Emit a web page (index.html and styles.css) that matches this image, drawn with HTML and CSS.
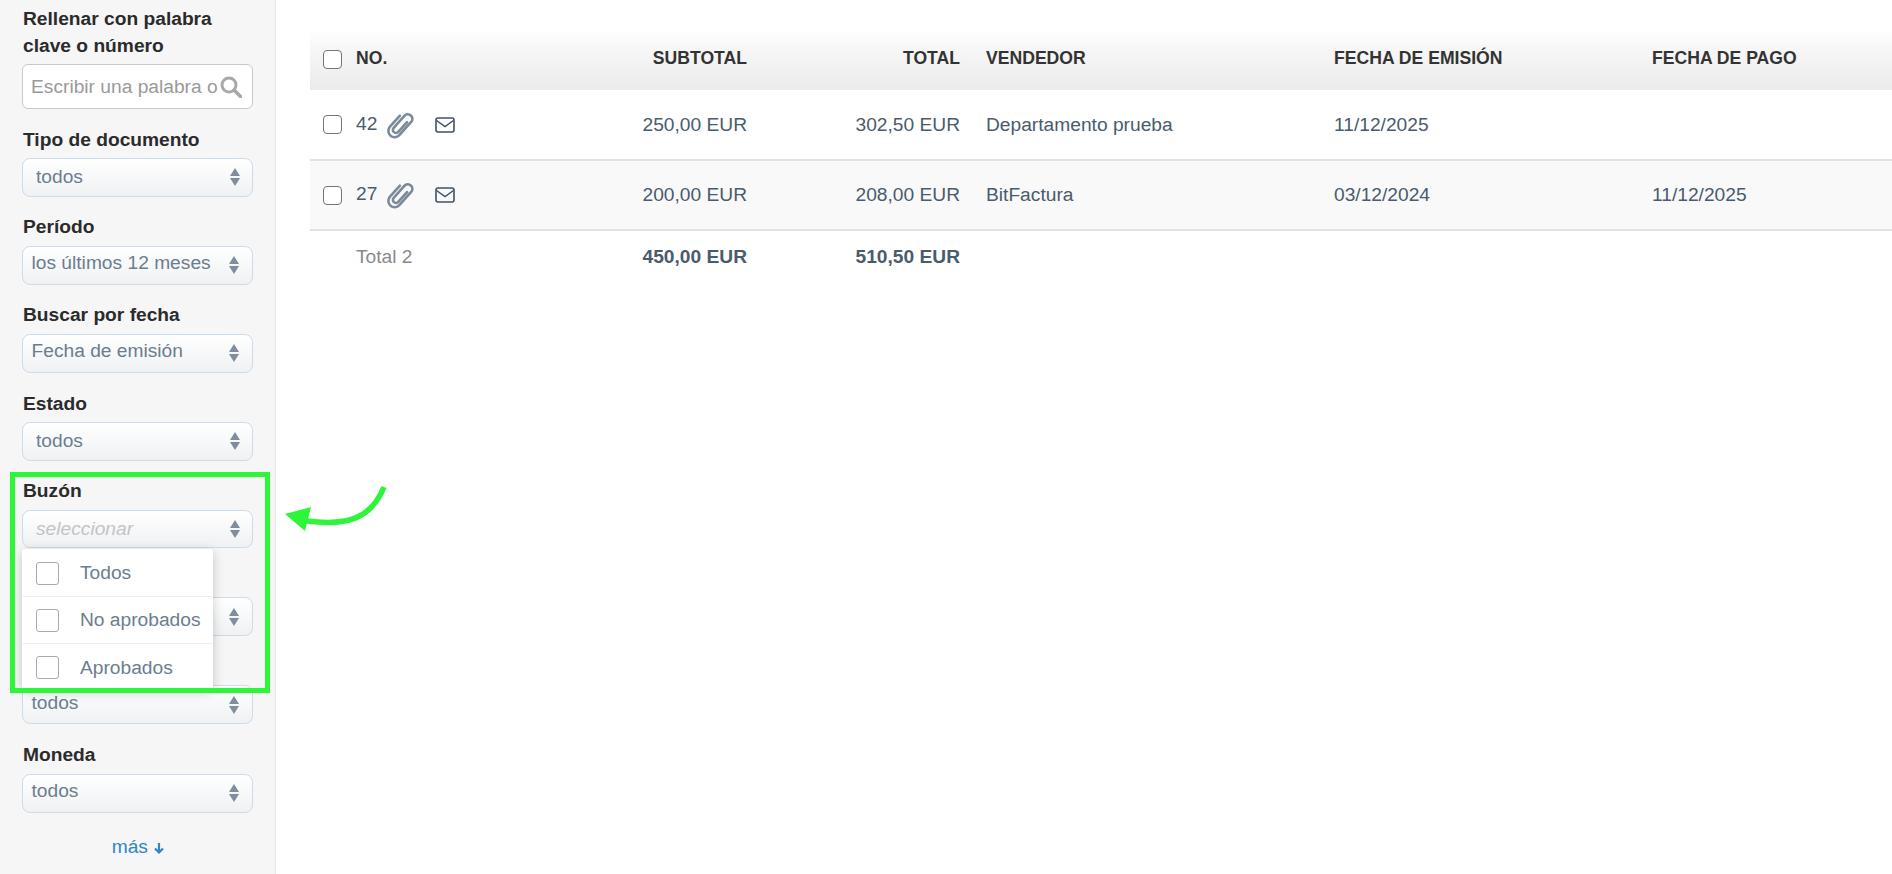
FILE: index.html
```html
<!DOCTYPE html>
<html lang="es">
<head>
<meta charset="utf-8">
<title>Gastos</title>
<link rel="stylesheet" href="styles.css">
</head>
<body>
<svg class="defs" aria-hidden="true">
  <symbol id="updown" viewBox="0 0 12 20"><path d="M6 1 11 9H1Z"/><path d="M1 11H11L6 19Z"/></symbol>
  <symbol id="clip" viewBox="0 0 28 26"><g transform="rotate(42 14 13)"><path d="M8.500 7V20a5.500 5.500 0 0 0 11 0V4.500a4 4 0 0 0-8 0V18.500a2.700 2.700 0 0 0 5.400 0V7" fill="none" stroke-width="2.300" stroke-linecap="round"/></g></symbol>
  <symbol id="mail" viewBox="0 0 20 16"><rect x="1" y="1" width="18" height="14" rx="2" fill="none" stroke-width="1.600"/><path d="M1.500 3.500 10 9.500l8.500-6" fill="none" stroke-width="1.500"/></symbol>
</svg>
<div class="app">
  <aside class="sidebar">
    <div class="field">
      <label class="label">Rellenar con palabra clave o número</label>
      <div class="search"><span class="search-text">Escribir una palabra o</span>
        <svg class="search-icon" viewBox="0 0 22 22"><circle cx="9" cy="9" r="7" fill="none" stroke="#a8a8a8" stroke-width="3"/><path d="M14 14l6.500 6.500" stroke="#a8a8a8" stroke-width="3.500" stroke-linecap="round"/></svg>
      </div>
    </div>
    <div class="field">
      <label class="label">Tipo de documento</label>
      <div class="select short inset"><span>todos</span><svg class="updown"><use href="#updown"/></svg></div>
    </div>
    <div class="field">
      <label class="label">Período</label>
      <div class="select"><span>los últimos 12 meses</span><svg class="updown"><use href="#updown"/></svg></div>
    </div>
    <div class="field">
      <label class="label">Buscar por fecha</label>
      <div class="select"><span>Fecha de emisión</span><svg class="updown"><use href="#updown"/></svg></div>
    </div>
    <div class="field">
      <label class="label">Estado</label>
      <div class="select short inset"><span>todos</span><svg class="updown"><use href="#updown"/></svg></div>
    </div>
    <div class="field has-menu">
      <label class="label">Buzón</label>
      <div class="select short inset placeholder"><span>seleccionar</span><svg class="updown"><use href="#updown"/></svg></div>
      <ul class="menu">
        <li class="menu-item"><span class="box"></span>Todos</li>
        <li class="menu-item"><span class="box"></span>No aprobados</li>
        <li class="menu-item"><span class="box"></span>Aprobados</li>
      </ul>
    </div>
    <div class="field">
      <label class="label">&nbsp;</label>
      <div class="select"><span>todos</span><svg class="updown"><use href="#updown"/></svg></div>
    </div>
    <div class="field">
      <label class="label">&nbsp;</label>
      <div class="select"><span>todos</span><svg class="updown"><use href="#updown"/></svg></div>
    </div>
    <div class="field">
      <label class="label">Moneda</label>
      <div class="select"><span>todos</span><svg class="updown"><use href="#updown"/></svg></div>
    </div>
    <a class="more">más <svg class="more-icon" viewBox="0 0 12 12"><path d="M6 1V10M2 6.500 6 10.500 10 6.500" fill="none" stroke="#2e86c8" stroke-width="2.200"/></svg></a>
  </aside>
  <main class="main">
    <table class="grid">
      <colgroup>
        <col class="c-check"><col class="c-no"><col class="c-sub"><col class="c-total"><col class="c-vendor"><col class="c-issue"><col class="c-pay">
      </colgroup>
      <thead>
        <tr>
          <th class="check"><span class="tick"></span></th>
          <th>NO.</th>
          <th class="num">SUBTOTAL</th>
          <th class="num">TOTAL</th>
          <th>VENDEDOR</th>
          <th>FECHA DE EMISIÓN</th>
          <th>FECHA DE PAGO</th>
        </tr>
      </thead>
      <tbody>
        <tr>
          <td class="check"><span class="tick"></span></td>
          <td><span class="no"><span class="no-text">42</span><svg class="i-clip"><use href="#clip"/></svg><svg class="i-mail"><use href="#mail"/></svg></span></td>
          <td class="num">250,00 EUR</td>
          <td class="num">302,50 EUR</td>
          <td>Departamento prueba</td>
          <td>11/12/2025</td>
          <td></td>
        </tr>
        <tr class="alt">
          <td class="check"><span class="tick"></span></td>
          <td><span class="no"><span class="no-text">27</span><svg class="i-clip"><use href="#clip"/></svg><svg class="i-mail"><use href="#mail"/></svg></span></td>
          <td class="num">200,00 EUR</td>
          <td class="num">208,00 EUR</td>
          <td>BitFactura</td>
          <td>03/12/2024</td>
          <td>11/12/2025</td>
        </tr>
      </tbody>
      <tfoot>
        <tr>
          <td></td>
          <td class="count">Total 2</td>
          <td class="num sum">450,00 EUR</td>
          <td class="num sum">510,50 EUR</td>
          <td></td><td></td><td></td>
        </tr>
      </tfoot>
    </table>
  </main>
</div>
<div class="highlight"></div>
<svg class="arrow" viewBox="0 0 110 60"><path d="M99 5C86 37 62 44 22 39" fill="none" stroke="#2cf53a" stroke-width="5.500"/><path d="M0 32 26 25 20 49Z" fill="#2cf53a"/></svg>
</body>
</html>
```
FILE: styles.css
```css
* { box-sizing: border-box; }
html, body { margin: 0; height: 100%; }
body {
  font-family: "Liberation Sans", Arial, sans-serif;
  color: #4a5b6d;
  background: #fff;
  overflow: hidden;
  position: relative;
}
.defs { display: none; }
.app { display: flex; height: 874px; }

.sidebar {
  width: 276px;
  flex: none;
  height: 100%;
  padding: 4.500px 22px 0;
  background: #f6f6f7;
  border-right: 1px solid #e3e5e8;
}
.field { margin-bottom: 16.700px; }
.has-menu { position: relative; }
.label {
  display: block;
  padding-left: 1px;
  font-size: 19.200px;
  font-weight: 700;
  line-height: 27px;
  margin-bottom: 5.500px;
  color: #2b2b2b;
}
.search {
  height: 45px;
  display: flex;
  align-items: center;
  justify-content: space-between;
  padding: 0 10px 0 8px;
  background: #fff;
  border: 1px solid #c9c9c9;
  border-radius: 6px;
}
.search-text {
  white-space: nowrap;
  font-size: 19.200px;
  color: #9a9a9a;
}
.search-icon { width: 22px; height: 22px; flex: none; }

.select {
  height: 39px;
  display: flex;
  align-items: center;
  justify-content: space-between;
  padding: 0 12px 4px 8.500px;
  background: linear-gradient(#fff, #eff1f3);
  border: 1px solid #cbdcec;
  border-radius: 8px;
  font-size: 19.200px;
  color: #6c7d8e;
  white-space: nowrap;
}
.short { height: 38.400px; }
.inset { padding: 0 11px 0 13px; }
.placeholder { color: #c4c4c4; font-style: italic; }
.updown { width: 12px; height: 20px; fill: #7f8d9c; flex: none; margin: 0 0 -4px; }
.inset .updown { margin: 0; }

.menu {
  position: absolute;
  z-index: 2;
  left: 0;
  top: 100%;
  width: 191px;
  height: 140px;
  margin: 1px 0 0;
  padding: 1px 0 0;
  list-style: none;
  background: #fff;
  border-radius: 3px;
  box-shadow: 0 3px 12px rgba(0, 0, 0, .2);
}
.menu-item {
  height: 47px;
  display: flex;
  align-items: center;
  padding-left: 14px;
  gap: 21px;
  font-size: 19.200px;
  color: #6c7d8e;
  border-bottom: 1px solid #efefef;
}
.menu-item:last-child { border-bottom: 0; }
.box {
  width: 23px;
  height: 23px;
  background: #fff;
  border: 1px solid #aaa;
  border-radius: 3px;
  flex: none;
}
.more {
  display: block;
  margin-top: 23px;
  padding-left: 2px;
  text-align: center;
  font-size: 19.200px;
  color: #2e86c8;
}
.more-icon { width: 12px; height: 12px; vertical-align: -1px; }

.main { flex: 1; min-width: 0; padding: 30px 0 0 34px; }
.grid { width: 1582px; table-layout: fixed; border-collapse: collapse; font-size: 19.200px; }
.c-check { width: 33px; }
.c-no { width: 200px; }
.c-sub { width: 217px; }
.c-total { width: 213px; }
.c-vendor { width: 348px; }
.c-issue { width: 318px; }
.c-pay { width: 253px; }
th, td { padding: 0 13px; text-align: left; white-space: nowrap; }
th {
  height: 60px;
  padding-bottom: 3px;
  font-size: 17.600px;
  color: #333;
  background: linear-gradient(#fff, #f7f7f7 30%, #ebebeb);
}
tbody td { height: 70px; border-bottom: 2px solid #e2e2e2; }
tfoot td { height: 52px; }
.alt td { background: #f9f9f9; }
th.check, td.check { padding: 0 0 0 13px; }
th.check .tick { margin-top: -1px; }
.num { text-align: right; }
.sum { font-weight: 700; }
.count { color: #8a8a8a; }
.tick {
  display: block;
  width: 19px;
  height: 19px;
  background: #fff;
  border: 1.500px solid #757575;
  border-radius: 4px;
}
.no { display: flex; align-items: center; }
.no-text { margin-top: -2px; }
.i-clip { width: 32px; height: 30px; margin-left: 7px; stroke: #7b8a99; }
.i-mail { width: 20px; height: 16px; margin-left: 19px; stroke: #3f5268; }

.highlight {
  position: absolute;
  z-index: 3;
  left: 9.500px;
  top: 472px;
  width: 260px;
  height: 221px;
  border: 5px solid #2cf53a;
}
.arrow {
  position: absolute;
  z-index: 3;
  left: 285px;
  top: 482px;
  width: 110px;
  height: 60px;
}
```
